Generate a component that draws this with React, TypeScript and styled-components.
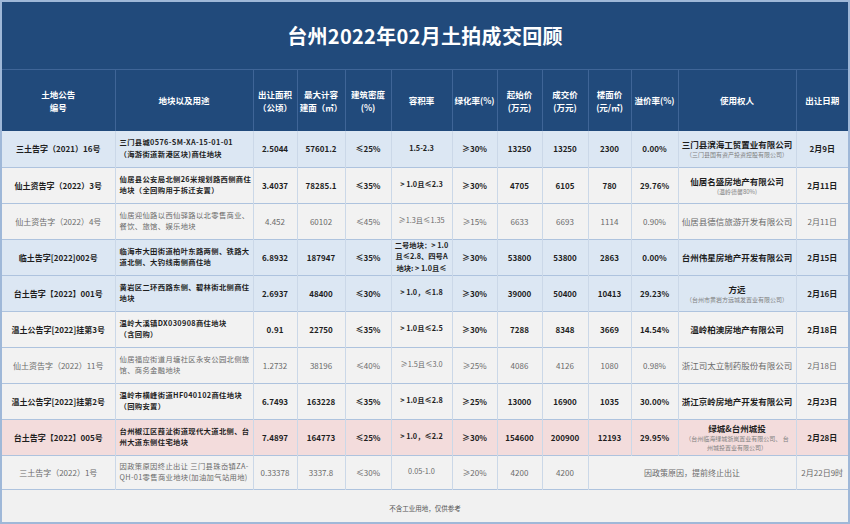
import React from 'react'
import styled, { createGlobalStyle } from 'styled-components'

const GlobalStyle = createGlobalStyle`
    html, body {
        margin: 0;
        padding: 0;
        background: #ffffff;
    }
    body {
        font-family: "Noto Sans CJK SC", "Noto Sans", sans-serif;
    }
`

const Frame = styled.div`
    width: 850px;
    height: 524px;
    box-sizing: border-box;
    border: 2px solid #9fb8d8;
    background: #f1f1f1;
    display: flex;
    flex-direction: column;
    overflow: hidden;
`

const TitleBar = styled.div`
    height: 67px;
    flex: 0 0 67px;
    background: #214a7b;
    color: #ffffff;
    display: flex;
    align-items: center;
    justify-content: center;
    font-size: 20px;
    font-weight: 700;
    letter-spacing: 0.3px;
    border-bottom: 1px solid #3f6597;
`

const Table = styled.table`
    width: 846px;
    border-collapse: collapse;
    table-layout: fixed;
`

const HeadRow = styled.tr`
    height: 61px;
    background: #214a7b;
`

const HeadCell = styled.th`
    color: #ffffff;
    font-size: 8.5px;
    font-weight: 700;
    line-height: 13px;
    text-align: center;
    padding: 0 1px;
    white-space: nowrap;
    border-left: 1px solid #3f6597;
    border-right: 1px solid #3f6597;
    &:first-child { border-left: none; }
    &:last-child { border-right: none; }
`

type Tone = 'blue' | 'gray' | 'pink'

const toneBg: Record<Tone, string> = {
    blue: '#dce7f3',
    gray: '#f2f2f2',
    pink: '#f3dcdc',
}

const BodyRow = styled.tr<{ $tone: Tone; $bold: boolean; $h: number }>`
    height: ${p => p.$h}px;
    background: ${p => toneBg[p.$tone]};
    color: ${p => (p.$bold ? '#1e1e1e' : '#6a6a6a')};
    font-weight: ${p => (p.$bold ? 700 : 400)};
    border-bottom: 1px solid #aec3de;
`

const Cell = styled.td<{ $left?: boolean; $small?: boolean }>`
    font-size: ${p => (p.$small ? '7.3px' : '8px')};
    line-height: ${p => (p.$small ? '11.5px' : '13px')};
    letter-spacing: ${p => (p.$left ? '0.35px' : '0')};
    text-align: ${p => (p.$left ? 'left' : 'center')};
    padding: ${p => (p.$left ? '0 1px 0 4px' : '0 1px')};
    border-left: 1px solid #cbd8e8;
    border-right: 1px solid #cbd8e8;
    white-space: nowrap;
    overflow: hidden;
    &:first-child { border-left: none; }
    &:last-child { border-right: none; }
`

const Owner = styled.div`
    font-size: 8.5px;
    line-height: 12px;
`

const OwnerNote = styled.div`
    font-size: 6px;
    line-height: 9px;
    font-weight: 400;
    color: #808080;
`

const FootRow = styled.tr`
    height: 35px;
    background: #f1f1f1;
`

const FootCell = styled.td`
    text-align: center;
    font-size: 6.5px;
    color: #555555;
    padding-top: 4px;
`

const widths = [113, 138, 44, 48, 46, 61, 45, 45, 46, 43, 47, 118, 52]

const headers: React.ReactNode[] = [
    <>土地公告<br />编号</>,
    '地块以及用途',
    <>出让面积<br />（公顷）</>,
    <>最大计容<br />建面（㎡）</>,
    <>建筑密度<br />(%)</>,
    '容积率',
    '绿化率(%)',
    <>起始价<br />(万元)</>,
    <>成交价<br />(万元)</>,
    <>楼面价<br />(元/㎡)</>,
    '溢价率(%)',
    '使用权人',
    '出让日期',
]

interface Deal {
    tone: Tone
    bold: boolean
    code: string
    plot: React.ReactNode
    area: string
    build: string
    density: string
    far: React.ReactNode
    green: string
    start?: string
    deal?: string
    floor?: string
    premium?: string
    owner?: string
    note?: React.ReactNode
    merged?: string
    date: string
    h?: number
}

const deals: Deal[] = [
    {
        tone: 'blue', bold: true, code: '三土告字（2021）16号',
        plot: <>三门县城0576-SM-XA-15-01-01<br />（海游街道新港区块)商住地块</>,
        area: '2.5044', build: '57601.2', density: '≤25%', far: '1.5-2.3', green: '≥30%',
        start: '13250', deal: '13250', floor: '2300', premium: '0.00%',
        owner: '三门县滨海工贸置业有限公司', note: '（三门县国有资产投资控股有限公司）', date: '2月9日',
    },
    {
        tone: 'gray', bold: true, code: '仙土资告字（2022）3号',
        plot: <>仙居县公安局北侧26米规划路西侧商住<br />地块（全回购用于拆迁安置）</>,
        area: '3.4037', build: '78285.1', density: '≤35%', far: '> 1.0且≤2.3', green: '≥30%',
        start: '4705', deal: '6105', floor: '780', premium: '29.76%',
        owner: '仙居名盛房地产有限公司', note: '(温岭德馨80%)', date: '2月11日',
    },
    {
        tone: 'gray', bold: false, code: '仙土资告字（2022）4号',
        plot: <>仙居迎仙路以西仙驿路以北零售商业、<br />餐饮、旅馆、娱乐地块</>,
        area: '4.452', build: '60102', density: '≤45%', far: '≥1.3且≤1.35', green: '≥15%',
        start: '6633', deal: '6693', floor: '1114', premium: '0.90%',
        owner: '仙居县德信旅游开发有限公司', date: '2月11日',
    },
    {
        tone: 'blue', bold: true, code: '临土告字[2022]002号',
        plot: <>临海市大田街道柏叶东路两侧、铁路大<br />道北侧、大钓线南侧商住地</>,
        area: '6.8932', build: '187947', density: '≤35%',
        far: <>二号地块：&gt; 1.0<br />且≤2.8、四号A<br />地块: &gt; 1.0且≤</>, green: '≥30%',
        start: '53800', deal: '53800', floor: '2863', premium: '0.00%',
        owner: '台州伟星房地产开发有限公司', date: '2月15日',
    },
    {
        tone: 'blue', bold: true, code: '台土告字【2022】001号',
        plot: <>黄岩区二环西路东侧、碧林街北侧商住<br />地块</>,
        area: '2.6937', build: '48400', density: '≤30%', far: '> 1.0，≤1.8', green: '≥30%',
        start: '39000', deal: '50400', floor: '10413', premium: '29.23%',
        owner: '方远', note: '（台州市黄岩方远城发置业有限公司）', date: '2月16日',
    },
    {
        tone: 'gray', bold: true, code: '温土公告字[2022]挂第3号',
        plot: <>温岭大溪镇DX030908商住地块<br />（含回购）</>,
        area: '0.91', build: '22750', density: '≤35%', far: '> 1.0且≤2.5', green: '≥30%',
        start: '7288', deal: '8348', floor: '3669', premium: '14.54%',
        owner: '温岭柏澳房地产有限公司', date: '2月18日',
    },
    {
        tone: 'gray', bold: false, code: '仙土资告字（2022）11号',
        plot: <>仙居福应街道月塘社区永安公园北侧旅<br />馆、商务金融地块</>,
        area: '1.2732', build: '38196', density: '≤40%', far: '≥1.5且≤3.0', green: '≥25%',
        start: '4086', deal: '4126', floor: '1080', premium: '0.98%',
        owner: '浙江司太立制药股份有限公司', date: '2月18日',
    },
    {
        tone: 'gray', bold: true, code: '温土公告字[2022]挂第2号',
        plot: <>温岭市横峰街道HF040102商住地块<br />（回购安置）</>,
        area: '6.7493', build: '163228', density: '≤35%', far: '> 1.0且≤2.8', green: '≥25%',
        start: '13000', deal: '16900', floor: '1035', premium: '30.00%',
        owner: '浙江京岭房地产开发有限公司', date: '2月23日',
    },
    {
        tone: 'pink', bold: true, code: '台土告字【2022】005号',
        plot: <>台州椒江区葭沚街道现代大道北侧、台<br />州大道东侧住宅地块</>,
        area: '7.4897', build: '164773', density: '≤25%', far: '> 1.0，≤2.2', green: '≥30%',
        start: '154600', deal: '200900', floor: '12193', premium: '29.95%',
        owner: '绿城&台州城投', note: <>（台州临海绿城浙岚置业有限公司、 台<br />州城投置业有限公司）</>,
        date: '2月28日',
    },
    {
        tone: 'gray', bold: false, code: '三土告字（2022）1号', h: 34,
        plot: <>因政策原因终止出让 三门县珠岙镇ZA-<br />QH-01零售商业地块(加油加气站用地)</>,
        area: '0.33378', build: '3337.8', density: '≤30%', far: '0.05-1.0', green: '≥20%',
        start: '4200', deal: '4200', merged: '因政策原因，提前终止出让', date: '2月22日9时',
    },
]

const App = () => (
    <>
        <GlobalStyle />
        <Frame>
            <TitleBar>台州2022年02月土拍成交回顾</TitleBar>
            <Table>
                <colgroup>
                    {widths.map((w, i) => <col key={`col-${i}`} style={{ width: w }} />)}
                </colgroup>
                <thead>
                    <HeadRow>
                        {headers.map((h, i) => <HeadCell key={`h-${i}`}>{h}</HeadCell>)}
                    </HeadRow>
                </thead>
                <tbody>
                    {deals.map((d, i) => (
                        <BodyRow key={`${d.code}-${i}`} $tone={d.tone} $bold={d.bold} $h={d.h ?? 36}>
                            <Cell>{d.code}</Cell>
                            <Cell $left $small>{d.plot}</Cell>
                            <Cell>{d.area}</Cell>
                            <Cell>{d.build}</Cell>
                            <Cell>{d.density}</Cell>
                            <Cell $small>{d.far}</Cell>
                            <Cell>{d.green}</Cell>
                            <Cell>{d.start}</Cell>
                            <Cell>{d.deal}</Cell>
                            {d.merged ? (
                                <Cell colSpan={3}>{d.merged}</Cell>
                            ) : (
                                <>
                                    <Cell>{d.floor}</Cell>
                                    <Cell>{d.premium}</Cell>
                                    <Cell>
                                        <Owner>{d.owner}</Owner>
                                        {d.note && <OwnerNote>{d.note}</OwnerNote>}
                                    </Cell>
                                </>
                            )}
                            <Cell>{d.date}</Cell>
                        </BodyRow>
                    ))}
                    <FootRow>
                        <FootCell colSpan={13}>不含工业用地，仅供参考</FootCell>
                    </FootRow>
                </tbody>
            </Table>
        </Frame>
    </>
)

export default App
